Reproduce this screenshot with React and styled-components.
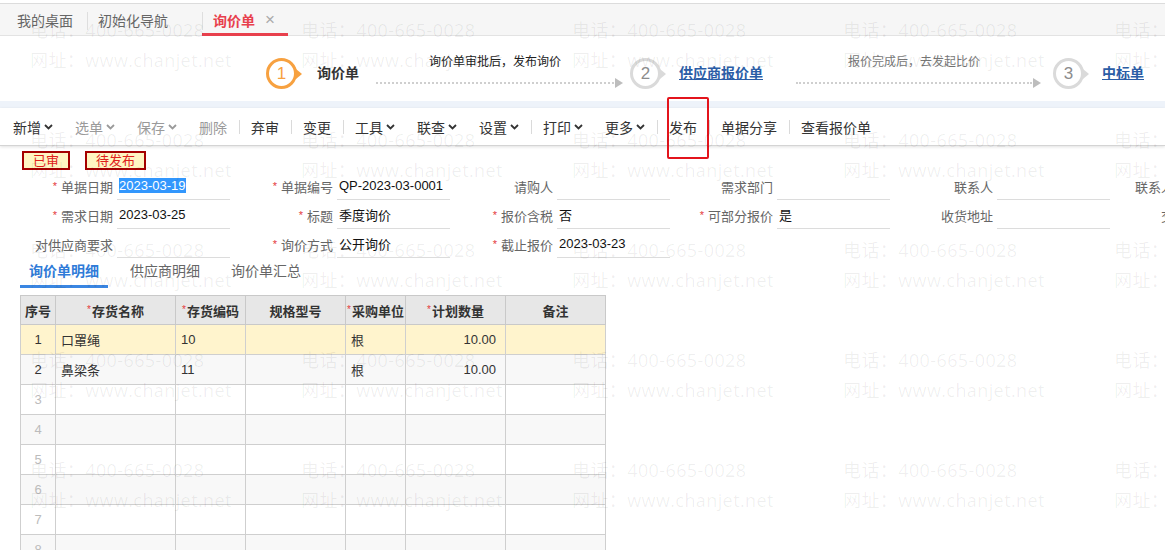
import React from "react";
import styled, { createGlobalStyle, css } from "styled-components";

const GlobalStyle = createGlobalStyle`
  html, body {
    margin: 0;
    padding: 0;
    background: #fff;
  }
  body {
    font-family: "Liberation Sans", Arial, "Noto Sans CJK SC", sans-serif;
    overflow: hidden;
  }
  * {
    box-sizing: border-box;
  }
`;

const Page = styled.div`
  position: relative;
  width: 1165px;
  height: 550px;
  overflow: hidden;
  background: #fff;
`;

/* ---- top tabs ---- */
const TabBar = styled.div`
  margin-top: 3px;
  height: 33px;
  display: flex;
  padding-left: 6px;
  background: #f6f6f6;
  border-top: 1px solid #dcdcdc;
  border-bottom: 1px solid #e3e3e3;
`;

const Tab = styled.div`
  position: relative;
  width: ${(p) => p.$width}px;
  display: flex;
  align-items: center;
  padding-left: 11px;
  font-size: 14px;
  color: #666;

  ${(p) =>
    p.$sep &&
    css`
      &::before {
        content: "";
        position: absolute;
        left: 0;
        top: 8px;
        width: 1px;
        height: 18px;
        background: #dedede;
      }
    `}

  ${(p) =>
    p.$active &&
    css`
      color: #e8404d;
      font-weight: bold;
      &::after {
        content: "";
        position: absolute;
        left: 0;
        right: 0;
        bottom: -1px;
        height: 3px;
        background: #e8404d;
      }
    `}
`;

const TabClose = styled.span`
  margin-left: 10px;
  font-size: 17px;
  font-weight: normal;
  color: #aaa;
`;

/* ---- step bar ---- */
const StepBar = styled.div`
  height: 65px;
  display: flex;
  align-items: flex-start;
  padding: 22px 0 0 266px;
`;

const StepCircle = styled.div`
  position: relative;
  flex-shrink: 0;
  width: 31px;
  height: 31px;
  border-radius: 50%;
  border: 3px solid ${(p) => (p.$active ? "#f7a140" : "#dadada")};
  display: flex;
  align-items: center;
  justify-content: center;
  font-size: 17px;
  color: ${(p) => (p.$active ? "#f7a140" : "#8c8c8c")};

  &::after {
    content: "";
    position: absolute;
    right: -8px;
    top: 50%;
    transform: translateY(-50%);
    border-left: 6px solid ${(p) => (p.$active ? "#f7a140" : "#dadada")};
    border-top: 5px solid transparent;
    border-bottom: 5px solid transparent;
  }
`;

const StepLabel = styled.div`
  margin-left: ${(p) => p.$gap}px;
  line-height: 31px;
  font-size: 14px;
  font-weight: bold;
  white-space: nowrap;
  color: ${(p) => (p.$link ? "#2b5da6" : "#333")};
  text-decoration: ${(p) => (p.$link ? "underline" : "none")};
`;

const Connector = styled.div`
  width: ${(p) => p.$width}px;
  margin: -4px ${(p) => p.$right}px 0 ${(p) => p.$left}px;
  display: flex;
  flex-direction: column;
  align-items: center;
`;

const ConnectorNote = styled.div`
  font-size: 12px;
  line-height: 16px;
  white-space: nowrap;
  color: ${(p) => (p.$muted ? "#777" : "#222")};
`;

const ConnectorLine = styled.div`
  position: relative;
  align-self: stretch;
  margin-top: 12px;
  border-top: 2px dotted #cfcfcf;

  &::after {
    content: "";
    position: absolute;
    right: -9px;
    top: -6px;
    border-left: 8px solid #bdbdbd;
    border-top: 5px solid transparent;
    border-bottom: 5px solid transparent;
  }
`;

const Strip = styled.div`
  height: 7px;
  background: #eef3fa;
`;

/* ---- toolbar ---- */
const Toolbar = styled.div`
  height: 38px;
  display: flex;
  align-items: center;
  padding-left: 2px;
  border-bottom: 1px solid #d4d4d4;
  box-shadow: 0 1px 3px rgba(0, 0, 0, 0.12);
`;

const ToolItem = styled.div`
  display: flex;
  align-items: center;
  gap: 3px;
  padding: 0 11px;
  font-size: 14px;
  white-space: nowrap;
  color: ${(p) => (p.$disabled ? "#9a9a9a" : "#333")};
`;

const ToolSep = styled.div`
  width: 1px;
  height: 14px;
  margin: 0 0.5px;
  background: #dadada;
`;

const Annotation = styled.div`
  position: absolute;
  left: 667px;
  top: 97px;
  width: 42px;
  height: 62px;
  border: 2px solid #e3141c;
  border-radius: 2px;
  z-index: 5;
`;

/* ---- status tags ---- */
const TagRow = styled.div`
  display: flex;
  gap: 15px;
  padding: 5px 0 0 22px;
`;

const Tag = styled.div`
  height: 19px;
  padding: 0 9px;
  border: 2px solid #a50000;
  background: #fff5c2;
  color: #e0201b;
  font-size: 13px;
  line-height: 15px;
`;

/* ---- form ---- */
const Form = styled.div`
  margin-top: 2px;
  padding-left: 10px;
  display: grid;
  grid-template-columns: repeat(6, 220px);
  grid-auto-rows: 28px;
  row-gap: 1px;
`;

const FormCell = styled.div`
  display: flex;
  align-items: stretch;
`;

const Label = styled.div`
  width: 103px;
  flex-shrink: 0;
  display: flex;
  align-items: center;
  justify-content: flex-end;
  font-size: 13px;
  color: #666;
  white-space: nowrap;
`;

const Star = styled.span`
  color: #e4393c;
  font-size: 11px;
  margin-right: 4px;
`;

const Field = styled.div`
  width: 113px;
  flex-shrink: 0;
  margin-left: 4px;
  display: flex;
  align-items: center;
  padding-left: 2px;
  border-bottom: 1px solid #dcdcdc;
  font-size: 13px;
  color: #111;
  white-space: nowrap;
`;

const Selected = styled.span`
  background: #3297fd;
  color: #fff;
`;

/* ---- detail tabs ---- */
const SubTabs = styled.div`
  display: flex;
  gap: 13px;
  padding-left: 20px;
  height: 30px;
  align-items: flex-end;
`;

const SubTab = styled.div`
  padding: 0 9px;
  line-height: 27px;
  font-size: 14px;
  color: ${(p) => (p.$active ? "#2f7bd8" : "#666")};
  font-weight: ${(p) => (p.$active ? "bold" : "normal")};
  border-bottom: 3px solid ${(p) => (p.$active ? "#3a86e2" : "transparent")};
`;

/* ---- grid table ---- */
const Table = styled.table`
  margin: 7px 0 0 20px;
  width: 586px;
  border-collapse: collapse;
  table-layout: fixed;
  font-size: 13px;
`;

const Th = styled.th`
  height: 29px;
  padding: 0;
  background: #e7e7e7;
  border: 1px solid #c9c9c9;
  color: #333;
  font-weight: bold;
  text-align: center;
  white-space: nowrap;
`;

const HeadStar = styled.span`
  position: relative;
  top: -3px;
  color: #e4393c;
  font-size: 10px;
  font-weight: normal;
  margin-right: 1px;
`;

const Tr = styled.tr`
  background: ${(p) => (p.$highlight ? "#fff4cd" : p.$even ? "#f8f8f8" : "#fff")};
`;

const Td = styled.td`
  height: 30px;
  padding: ${(p) => (p.$right ? "0 9px 0 0" : "0 5px")};
  border: 1px solid #cfcfcf;
  color: #333;
  text-align: ${(p) => (p.$right ? "right" : p.$center ? "center" : "left")};
  white-space: nowrap;
`;

const RowNo = styled(Td)`
  text-align: center;
  padding: 0;
  color: ${(p) => (p.$filled ? "#333" : "#bcbcbc")};
`;

/* ---- watermark ---- */
const Watermark = styled.div`
  position: absolute;
  inset: 0;
  pointer-events: none;
  z-index: 10;
  display: grid;
  grid-template-columns: repeat(5, 271px);
  grid-auto-rows: 110px;
  padding: 15px 0 0 30px;
`;

const Mark = styled.div`
  font-family: "Open Sans", "Noto Sans CJK SC", sans-serif;
  font-size: 18px;
  line-height: 30px;
  letter-spacing: 0.4px;
  color: rgba(0, 0, 0, 0.065);
  white-space: nowrap;
`;

const Chevron = () => (
  <svg width="9" height="6" viewBox="0 0 9 6">
    <path d="M1 1 L4.5 4.5 L8 1" stroke="currentColor" strokeWidth="1.8" fill="none" />
  </svg>
);

const tools = [
  { t: "新增", menu: true },
  { t: "选单", menu: true, off: true },
  { t: "保存", menu: true, off: true },
  { t: "删除", off: true },
  "|",
  { t: "弃审" },
  "|",
  { t: "变更" },
  "|",
  { t: "工具", menu: true },
  { t: "联查", menu: true },
  { t: "设置", menu: true },
  "|",
  { t: "打印", menu: true },
  { t: "更多", menu: true },
  "|",
  { t: "发布" },
  "|",
  { t: "单据分享" },
  "|",
  { t: "查看报价单" },
];

const fields = [
  { label: "单据日期", req: true, value: "2023-03-19", sel: true },
  { label: "单据编号", req: true, value: "QP-2023-03-0001" },
  { label: "请购人" },
  { label: "需求部门" },
  { label: "联系人" },
  { label: "联系人手机号" },
  { label: "需求日期", req: true, value: "2023-03-25" },
  { label: "标题", req: true, value: "季度询价" },
  { label: "报价含税", req: true, value: "否" },
  { label: "可部分报价", req: true, value: "是" },
  { label: "收货地址" },
  { label: "交货方式" },
  { label: "对供应商要求" },
  { label: "询价方式", req: true, value: "公开询价" },
  { label: "截止报价", req: true, value: "2023-03-23" },
];

const columns = [
  { t: "序号", w: 35 },
  { t: "存货名称", w: 120, req: true },
  { t: "存货编码", w: 70, req: true },
  { t: "规格型号", w: 100 },
  { t: "采购单位", w: 60, req: true },
  { t: "计划数量", w: 100, req: true },
  { t: "备注", w: 100 },
];

const rows = [
  { name: "口罩绳", code: "10", unit: "根", qty: "10.00" },
  { name: "鼻梁条", code: "11", unit: "根", qty: "10.00" },
  {}, {}, {}, {}, {}, {},
];

export default function App() {
  return (
    <Page>
      <GlobalStyle />

      <TabBar>
        <Tab $width={81}>我的桌面</Tab>
        <Tab $width={115} $sep>初始化导航</Tab>
        <Tab $width={86} $sep $active>
          询价单<TabClose>×</TabClose>
        </Tab>
      </TabBar>

      <StepBar>
        <StepCircle $active>1</StepCircle>
        <StepLabel $gap={20}>询价单</StepLabel>
        <Connector $width={238} $left={17} $right={16}>
          <ConnectorNote>询价单审批后，发布询价</ConnectorNote>
          <ConnectorLine />
        </Connector>
        <StepCircle>2</StepCircle>
        <StepLabel $gap={18} $link>供应商报价单</StepLabel>
        <Connector $width={236} $left={33} $right={21}>
          <ConnectorNote $muted>报价完成后，去发起比价</ConnectorNote>
          <ConnectorLine />
        </Connector>
        <StepCircle>3</StepCircle>
        <StepLabel $gap={18} $link>中标单</StepLabel>
      </StepBar>

      <Strip />

      <Toolbar>
        {tools.map((it, i) =>
          it === "|" ? (
            <ToolSep key={i} />
          ) : (
            <ToolItem key={i} $disabled={it.off}>
              {it.t}
              {it.menu && <Chevron />}
            </ToolItem>
          )
        )}
      </Toolbar>
      <Annotation />

      <TagRow>
        <Tag>已审</Tag>
        <Tag>待发布</Tag>
      </TagRow>

      <Form>
        {fields.map((f, i) => (
          <FormCell key={i}>
            <Label>
              {f.req && <Star>*</Star>}
              {f.label}
            </Label>
            <Field>{f.sel ? <Selected>{f.value}</Selected> : f.value}</Field>
          </FormCell>
        ))}
      </Form>

      <SubTabs>
        <SubTab $active>询价单明细</SubTab>
        <SubTab>供应商明细</SubTab>
        <SubTab>询价单汇总</SubTab>
      </SubTabs>

      <Table>
        <colgroup>
          {columns.map((c) => (
            <col key={c.t} style={{ width: c.w }} />
          ))}
        </colgroup>
        <thead>
          <tr>
            {columns.map((c) => (
              <Th key={c.t}>
                {c.req && <HeadStar>*</HeadStar>}
                {c.t}
              </Th>
            ))}
          </tr>
        </thead>
        <tbody>
          {rows.map((r, i) => (
            <Tr key={i} $highlight={i === 0} $even={i % 2 === 1}>
              <RowNo $filled={!!r.name}>{i + 1}</RowNo>
              <Td>{r.name}</Td>
              <Td>{r.code}</Td>
              <Td></Td>
              <Td>{r.unit}</Td>
              <Td $right>{r.qty}</Td>
              <Td></Td>
            </Tr>
          ))}
        </tbody>
      </Table>

      <Watermark>
        {Array.from({ length: 25 }).map((_, i) => (
          <Mark key={i}>
            电话：400-665-0028
            <br />
            网址：www.chanjet.net
          </Mark>
        ))}
      </Watermark>
    </Page>
  );
}
